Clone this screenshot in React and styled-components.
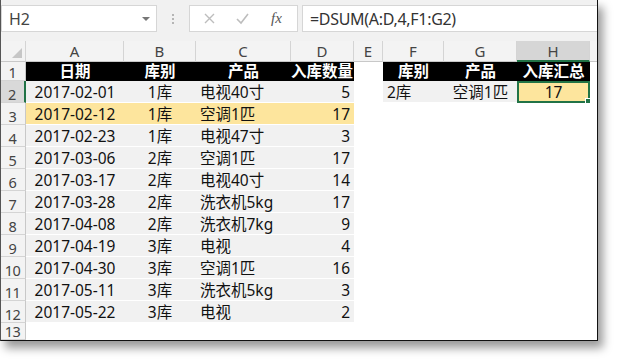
import React from 'react';
import styled, { createGlobalStyle, css } from 'styled-components';

const GlobalStyle = createGlobalStyle`
  body {
    margin: 0;
    background: #ffffff;
    font-family: "Noto Sans", "Noto Sans CJK SC", sans-serif;
  }
`;

const Page = styled.div`
  width: 620px;
  height: 362px;
  background: #fff;
  overflow: hidden;
`;

const Window = styled.div`
  width: 596px;
  height: 340px;
  background: #fff;
  border-left: 1px solid #555;
  border-right: 1px solid #111;
  border-bottom: 1px solid #111;
  box-shadow: 5px 7px 9px rgba(0, 0, 0, 0.4);
  display: flex;
  flex-direction: column;
  overflow: hidden;
`;

const FormulaBar = styled.div`
  height: 41px;
  flex: none;
  background: #f1f1f1;
  display: flex;
  align-items: flex-start;
  padding-top: 5px;
  box-sizing: border-box;
`;

const NameBox = styled.div`
  width: 156px;
  height: 27px;
  box-sizing: border-box;
  background: #fff;
  border: 1px solid #d6d6d6;
  display: flex;
  align-items: center;
  justify-content: space-between;
  padding: 0 6px 0 7px;
  font-size: 16px;
  color: #444;
`;

const Caret = styled.span`
  width: 0;
  height: 0;
  border-left: 4px solid transparent;
  border-right: 4px solid transparent;
  border-top: 4px solid #777;
`;

const Dots = styled.div`
  width: 32px;
  height: 27px;
  display: flex;
  flex-direction: column;
  align-items: center;
  justify-content: center;
  gap: 2px;
  span {
    width: 2px;
    height: 2px;
    background: #b5b5b5;
  }
`;

const FxButtons = styled.div`
  width: 109px;
  height: 27px;
  box-sizing: border-box;
  background: #fff;
  border: 1px solid #d6d6d6;
  display: flex;
  align-items: center;
  padding: 0 0 0 13px;
  gap: 19px;
`;

const Fx = styled.span`
  font-family: "Liberation Serif", serif;
  font-style: italic;
  font-size: 15px;
  color: #555;
  margin-left: 2px;
`;

const FormulaInput = styled.div`
  flex: 1;
  height: 27px;
  margin-left: 4px;
  box-sizing: border-box;
  background: #fff;
  border: 1px solid #d6d6d6;
  border-right: none;
  display: flex;
  align-items: center;
  padding-left: 7px;
  font-size: 16px;
  color: #333;
  letter-spacing: -0.3px;
`;

const Sheet = styled.div`
  display: grid;
  grid-template-columns: 25px 98px 72px 95px 63px 29px 61px 73px 73px 1fr;
  grid-template-rows: 21px 19px repeat(11, 22px) 1fr;
  flex: 1;
  font-size: 15.5px;
  line-height: 18px;
  color: #111;
`;

const Corner = styled.div`
  background: #f3f3f3;
  border-right: 1px solid #d4d4d4;
  border-bottom: 1px solid #c8c8c8;
  box-sizing: border-box;
  display: flex;
  align-items: flex-end;
  justify-content: flex-end;
  padding: 0 3px 3px 0;
  &::after {
    content: '';
    width: 0;
    height: 0;
    border-left: 10px solid transparent;
    border-bottom: 10px solid #c6c6c6;
  }
`;

const ColHead = styled.div`
  background: ${(p) => (p.$active ? '#d6d6d6' : '#f3f3f3')};
  border-right: 1px solid #d4d4d4;
  border-bottom: ${(p) => (p.$active ? '2px solid #217346' : '1px solid #c8c8c8')};
  box-sizing: border-box;
  display: flex;
  align-items: center;
  justify-content: center;
  font-size: 15px;
  color: #444;
`;

const RowHead = styled.div`
  background: ${(p) => (p.$active ? '#d9d9d9' : '#f3f3f3')};
  border-right: ${(p) => (p.$active ? '2px solid #217346' : '1px solid #c8c8c8')};
  border-bottom: 1px solid #d4d4d4;
  box-sizing: border-box;
  display: flex;
  align-items: flex-end;
  justify-content: center;
  font-size: 14.5px;
  line-height: 16px;
  color: #444;
  letter-spacing: -0.5px;
  padding: 0 1px 0 0;
  overflow: hidden;
`;

const fills = {
  none: '#ffffff',
  head: '#000000',
  data: '#f1f1f1',
  gold: '#fde59d',
};

const Cell = styled.div`
  position: relative;
  box-sizing: border-box;
  background: ${(p) => fills[p.$fill || 'none']};
  display: flex;
  align-items: center;
  justify-content: ${(p) =>
    p.$align === 'right' ? 'flex-end' : p.$align === 'left' ? 'flex-start' : 'center'};
  padding: 0 4px;
  white-space: nowrap;
  ${(p) =>
    (p.$fill === 'data' || p.$fill === 'gold') &&
    css`
      border-bottom: 1px solid #ffffff;
    `}
  ${(p) =>
    p.$fill === 'head' &&
    css`
      color: #fff;
      font-weight: 700;
      font-size: 15.5px;
      line-height: 16px;
      padding: 0 1px 1px;
    `}
  ${(p) =>
    p.$selected &&
    css`
      border: 2px solid #217346;
    `}
`;

const Handle = styled.span`
  position: absolute;
  right: -4px;
  bottom: -4px;
  width: 5px;
  height: 5px;
  background: #217346;
  border: 1px solid #fff;
`;

const letters = ['A', 'B', 'C', 'D', 'E', 'F', 'G', 'H', ''];

const data = [
  ['2017-02-01', '1库', '电视40寸', 5],
  ['2017-02-12', '1库', '空调1匹', 17],
  ['2017-02-23', '1库', '电视47寸', 3],
  ['2017-03-06', '2库', '空调1匹', 17],
  ['2017-03-17', '2库', '电视40寸', 14],
  ['2017-03-28', '2库', '洗衣机5kg', 17],
  ['2017-04-08', '2库', '洗衣机7kg', 9],
  ['2017-04-19', '3库', '电视', 4],
  ['2017-04-30', '3库', '空调1匹', 16],
  ['2017-05-11', '3库', '洗衣机5kg', 3],
  ['2017-05-22', '3库', '电视', 2],
];

const Blank = ({ n }) =>
  Array.from({ length: n }).map((_, i) => <Cell key={`b${i}`} />);

const App = () => (
  <Page>
    <GlobalStyle />
    <Window>
      <FormulaBar>
        <NameBox>
          H2
          <Caret />
        </NameBox>
        <Dots>
          <span />
          <span />
          <span />
        </Dots>
        <FxButtons>
          <svg width="13" height="13" viewBox="0 0 13 13">
            <path d="M2 2 L11 11 M11 2 L2 11" stroke="#bdbdbd" strokeWidth="1.4" />
          </svg>
          <svg width="15" height="13" viewBox="0 0 15 13">
            <path d="M2 7 L6 11 L13 2" stroke="#bdbdbd" strokeWidth="1.6" fill="none" />
          </svg>
          <Fx>fx</Fx>
        </FxButtons>
        <FormulaInput>=DSUM(A:D,4,F1:G2)</FormulaInput>
      </FormulaBar>

      <Sheet>
        <Corner />
        {letters.map((l, i) => (
          <ColHead key={`c${i}`} $active={l === 'H'}>
            {l}
          </ColHead>
        ))}

        <RowHead>1</RowHead>
        <Cell $fill="head">日期</Cell>
        <Cell $fill="head">库别</Cell>
        <Cell $fill="head">产品</Cell>
        <Cell $fill="head" $align="right">入库数量</Cell>
        <Cell />
        <Cell $fill="head">库别</Cell>
        <Cell $fill="head">产品</Cell>
        <Cell $fill="head">入库汇总</Cell>
        <Cell />

        {data.map((r, i) => {
          const rowNum = i + 2;
          const fill = rowNum === 3 ? 'gold' : 'data';
          return (
            <React.Fragment key={rowNum}>
              <RowHead $active={rowNum === 2}>{rowNum}</RowHead>
              <Cell $fill={fill}>{r[0]}</Cell>
              <Cell $fill={fill}>{r[1]}</Cell>
              <Cell $fill={fill} $align="left">{r[2]}</Cell>
              <Cell $fill={fill} $align="right">{r[3]}</Cell>
              {rowNum === 2 ? (
                <>
                  <Cell />
                  <Cell $fill="data" $align="left">2库</Cell>
                  <Cell $fill="data">空调1匹</Cell>
                  <Cell $fill="gold" $selected>
                    17
                    <Handle />
                  </Cell>
                  <Cell />
                </>
              ) : (
                <Blank n={5} />
              )}
            </React.Fragment>
          );
        })}

        <RowHead>13</RowHead>
        <Blank n={9} />
      </Sheet>
    </Window>
  </Page>
);

export default App;
